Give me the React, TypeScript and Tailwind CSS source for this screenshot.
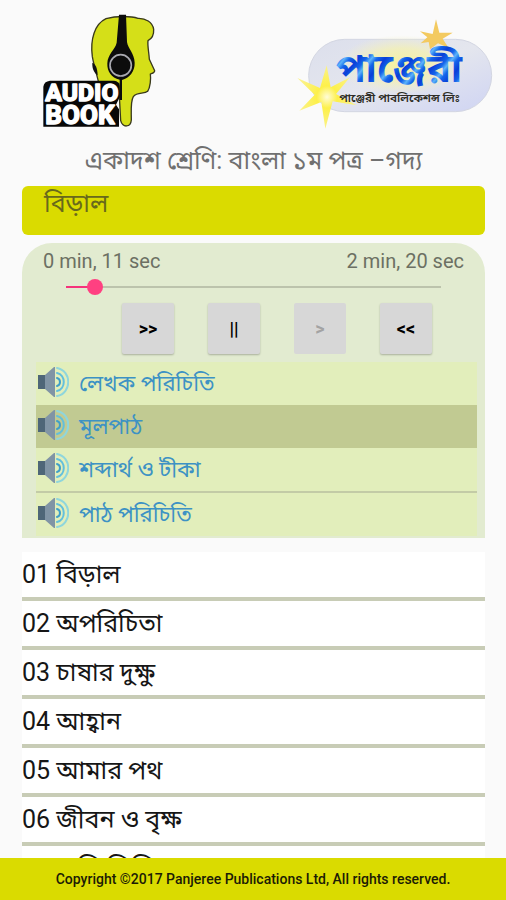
import { useState } from "react";

const DURATION = 140;

const sections = ["লেখক পরিচিতি", "মূলপাঠ", "শব্দার্থ ও টীকা", "পাঠ পরিচিতি"];

const chapters = [
  "01 বিড়াল",
  "02 অপরিচিতা",
  "03 চাষার দুক্ষু",
  "04 আহ্বান",
  "05 আমার পথ",
  "06 জীবন ও বৃক্ষ",
  "07 মাসি-পিসি",
];

function AudioBookLogo() {
  return (
    <svg
      className="w-[116px] h-[114px] shrink-0"
      viewBox="66 42 348 342"
      role="img"
      aria-label="Audio Book"
    >
      <path
        d="M236 248 C230 222 222 198 217 170 C210 118 224 72 258 56 C290 47 334 48 354 55 C376 54 398 66 401 88 C402 104 396 116 384 122 C382 138 387 158 388 178 L404 212 C404 219 396 220 391 222 C393 236 391 262 383 274 C372 284 352 274 340 290 C331 304 334 334 334 360 C332 383 308 384 302 362 L296 250 Z"
        fill="#d5df18"
        stroke="#39391c"
        strokeWidth="4"
        strokeLinejoin="round"
      />
      <path d="M297 44 H318 L321 126 C324 146 343 160 344 188 C345 214 328 234 306 240 V300 H299 V239 C274 234 261 214 262 190 C263 162 286 148 290 128 Z" fill="#0c0c0c" />
      <circle cx="302" cy="196" r="32" fill="none" stroke="#a9a9b0" strokeWidth="5" />
      <path d="M217 188 C227 192 232 204 233 226 C222 218 216 206 217 188 Z" fill="#111" />
      <path
        d="M90 242 H282 Q298 244 299 258 V292 L288 314 L297 328 V380 H70 V260 Q72 244 90 242 Z"
        fill="#080808"
      />
      <g
        fill="#fff"
        stroke="#fff"
        strokeWidth="4"
        strokeLinejoin="round"
        fontFamily="Roboto, 'Liberation Sans', sans-serif"
        fontWeight="800"
      >
        <text x="76" y="304" fontSize="74">AUDIO</text>
        <text x="76" y="372" fontSize="78">BOOK</text>
      </g>
    </svg>
  );
}

function PanjereeLogo() {
  return (
    <svg
      className="w-[198px] h-[112px] shrink-0"
      viewBox="18 24 594 336"
      role="img"
      aria-label="পাঞ্জেরী পাবলিকেশন্স লিঃ"
    >
      <defs>
        <linearGradient id="pill" x1="0" y1="0" x2="1" y2="1">
          <stop offset="0" stopColor="#dcdfec" />
          <stop offset="0.5" stopColor="#e4e6ee" />
          <stop offset="1" stopColor="#cfd4f3" />
        </linearGradient>
        <linearGradient id="ink" x1="0" y1="0" x2="24" y2="20" gradientUnits="userSpaceOnUse" spreadMethod="reflect">
          <stop offset="0" stopColor="#0a3fd8" />
          <stop offset="0.6" stopColor="#1565ea" />
          <stop offset="1" stopColor="#5cb4fa" />
        </linearGradient>
        <radialGradient id="glow">
          <stop offset="0" stopColor="#f5f19e" />
          <stop offset="0.55" stopColor="#f3f0b4" stopOpacity="0.8" />
          <stop offset="1" stopColor="#f3f0c8" stopOpacity="0" />
        </radialGradient>
        <radialGradient id="star">
          <stop offset="0" stopColor="#fffcd8" />
          <stop offset="0.35" stopColor="#fdf04a" />
          <stop offset="1" stopColor="#fbf28c" />
        </radialGradient>
      </defs>
      <rect x="56" y="88" width="549" height="217" rx="108" fill="url(#pill)" stroke="#d3d6e2" strokeWidth="3" />
      <ellipse cx="335" cy="165" rx="190" ry="90" fill="url(#glow)" />
      <path
        d="M438 28 L448 68 L488 68 L458 86 L476 114 L444 100 L420 118 L416 96 L392 100 L412 82 L390 64 L428 72 Z"
        fill="#f3ca60"
      />
      <text
        x="138"
        y="216"
        fontSize="120"
        fontWeight="700"
        fill="url(#ink)"
        fontFamily="'Noto Sans Bengali', 'Noto Sans', sans-serif"
      >
        পাঞ্জেরী
      </text>
      <path
        d="M110 166 L122 232 L180 202 L138 252 L200 286 L128 274 L106 356 L94 276 L28 302 L74 254 L22 204 L90 234 Z"
        fill="url(#star)"
      />
      <text
        x="148"
        y="277"
        fontSize="35"
        fontWeight="600"
        fill="#2d2d25"
        fontFamily="'Noto Sans Bengali', 'Noto Sans', sans-serif"
      >
        পাঞ্জেরী পাবলিকেশন্স লিঃ
      </text>
    </svg>
  );
}

function SpeakerIcon() {
  return (
    <svg className="w-8 h-8 mb-1 shrink-0" viewBox="0 0 32 32" aria-hidden="true">
      <path d="M1 9 H9 V23 H1 Z" fill="#4e6678" />
      <path d="M8 9 L17 1 H18 V31 H17 L8 23 Z" fill="#8094a5" />
      <g fill="none" strokeLinecap="round">
        <path d="M20 12 C24 13 24 19 20 20" stroke="#3f9fc8" strokeWidth="2" />
        <path d="M20 7 C29 9 29 23 20 25" stroke="#62bfdc" strokeWidth="2" />
        <path d="M20 2 C35 5 35 27 20 30" stroke="#8fd6dc" strokeWidth="2" />
      </g>
    </svg>
  );
}

function formatTime(total: number) {
  return `${Math.floor(total / 60)} min, ${total % 60} sec`;
}

function Player() {
  const [time, setTime] = useState(11);
  const [section, setSection] = useState(1);
  const button =
    "w-[52px] h-[51px] rounded-xs bg-[#d7d7d7] text-lg font-bold text-black shadow-[0_1px_2px_rgba(0,0,0,0.25)] disabled:text-[#a3a3a3] disabled:shadow-none";

  return (
    <section className="mt-2 rounded-t-[30px] bg-[#e2ebd0] pb-[2px]">
      <div className="flex justify-between px-[21px] pt-1 text-xl leading-7 text-[#6c7063]">
        <span>{formatTime(time)}</span>
        <span>{formatTime(DURATION)}</span>
      </div>
      <div className="relative ml-9 mr-9 h-6">
        <div className="absolute inset-x-2 top-[11px] h-[2px] bg-[#bcc3ac]">
          <div className="h-[2px] bg-[#f5337b]" style={{ width: `${(time / DURATION) * 100}%` }} />
        </div>
        <input
          type="range"
          aria-label="Position"
          min={0}
          max={DURATION}
          value={time}
          onChange={(e) => setTime(Number(e.target.value))}
          className="absolute inset-0 w-full h-6 appearance-none bg-transparent [&::-webkit-slider-thumb]:appearance-none [&::-webkit-slider-thumb]:w-4 [&::-webkit-slider-thumb]:h-4 [&::-webkit-slider-thumb]:rounded-full [&::-webkit-slider-thumb]:bg-[#ff4081]"
        />
      </div>
      <div className="flex justify-between pt-1 pb-2 pl-[100px] pr-[53px]">
        <button type="button" className={button}>{">>"}</button>
        <button type="button" className={button}>||</button>
        <button type="button" disabled className={button}>{">"}</button>
        <button type="button" className={button}>{"<<"}</button>
      </div>
      <ul className="ml-[14px] mr-2 bg-[#e2eebb]">
        {sections.map((name, i) => (
          <li key={name} className={i === 2 ? "border-b-2 border-[#c3cba6]" : ""}>
            <button
              type="button"
              onClick={() => setSection(i)}
              className={`flex items-center gap-[10px] w-full h-[43px] pl-[1px] text-left text-[22px] text-[#3d92c4] ${
                i === section ? "bg-[#c1ca92]" : ""
              }`}
            >
              <SpeakerIcon />
              {name}
            </button>
          </li>
        ))}
      </ul>
    </section>
  );
}

export default function App() {
  return (
    <div className="flex flex-col h-screen overflow-hidden bg-[#fafafa] font-[Roboto,'Noto_Sans_Bengali','Noto_Sans',sans-serif]">
      <header className="flex justify-between pt-[14px] pl-[42px] pr-3">
        <AudioBookLogo />
        <div className="pt-1">
          <PanjereeLogo />
        </div>
      </header>
      <main className="flex flex-col flex-1 min-h-0 pl-[22px] pr-[21px]">
        <h1 className="mt-[11px] mb-[5px] text-center text-[25px] leading-10 text-[#707070]">
          একাদশ শ্রেণি: বাংলা ১ম পত্র –গদ্য
        </h1>
        <h2 className="h-[49px] rounded-md bg-[#dadb00] px-[22px] text-[25px] leading-9 text-[#68691c]">
          বিড়াল
        </h2>
        <Player />
        <ul className="mt-[14px] flex-1 min-h-0 overflow-hidden bg-white">
          {chapters.map((name) => (
            <li key={name} className="border-b-4 border-[#c8ccb6]">
              <button type="button" className="block w-full h-[45px] text-left text-[25px] text-[#161616]">
                {name}
              </button>
            </li>
          ))}
        </ul>
      </main>
      <footer className="flex items-center justify-center h-[42px] shrink-0 bg-[#dadb00] text-sm font-medium text-[#1c1c05]">
        Copyright ©2017 Panjeree Publications Ltd, All rights reserved.
      </footer>
    </div>
  );
}
